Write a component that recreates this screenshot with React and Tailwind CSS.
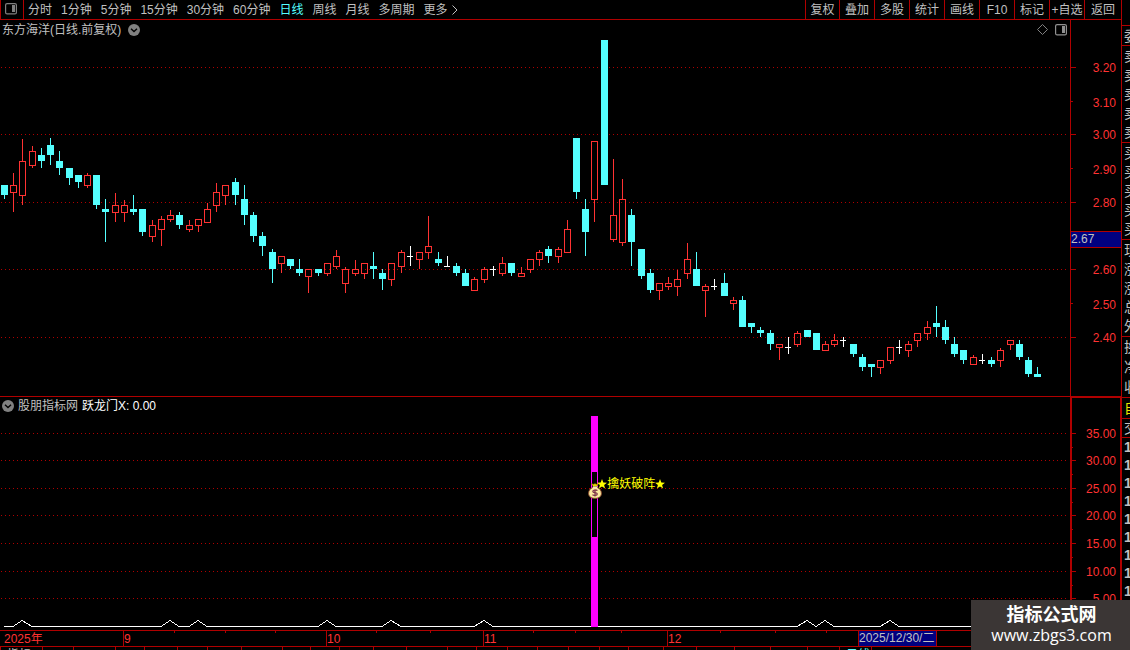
import { Fragment } from 'react';
import clsx from 'clsx';

const PERIODS = ['分时', '1分钟', '5分钟', '15分钟', '30分钟', '60分钟', '日线', '周线', '月线', '多周期'];

const TOOLS = [
  { label: '复权', width: 'w-[34px]' },
  { label: '叠加', width: 'w-[35px]' },
  { label: '多股', width: 'w-[35px]' },
  { label: '统计', width: 'w-[35px]' },
  { label: '画线', width: 'w-[35px]' },
  { label: 'F10', width: 'w-[35px]' },
  { label: '标记', width: 'w-[35px]' },
  { label: '+自选', width: 'w-[35px]' },
  { label: '返回', width: 'w-[37px]' },
];

// [high, body top, body bottom, low, kind]  d = down, u = up, f = flat
const CANDLES = [
  [185, 185, 195, 199, 'd'], [173, 185, 193, 212, 'u'], [139, 161, 196, 205, 'u'], [146, 151, 166, 168, 'u'],
  [148, 155, 161, 168, 'd'], [138, 145, 155, 165, 'd'], [151, 161, 168, 175, 'd'], [168, 168, 178, 185, 'd'],
  [175, 175, 182, 188, 'd'], [173, 175, 186, 188, 'u'], [175, 175, 205, 209, 'd'], [199, 209, 212, 242, 'd'],
  [193, 205, 213, 222, 'u'], [200, 205, 213, 222, 'u'], [195, 209, 212, 215, 'd'], [209, 209, 232, 236, 'd'],
  [220, 225, 237, 242, 'u'], [216, 219, 230, 246, 'u'], [210, 215, 220, 222, 'u'], [212, 215, 225, 229, 'd'],
  [220, 225, 230, 232, 'u'], [219, 219, 226, 232, 'u'], [203, 209, 223, 223, 'u'], [183, 192, 206, 212, 'u'],
  [185, 185, 196, 205, 'u'], [178, 182, 195, 205, 'd'], [185, 199, 215, 225, 'd'], [212, 215, 236, 242, 'd'],
  [232, 236, 246, 256, 'd'], [249, 252, 269, 283, 'd'], [256, 256, 264, 273, 'u'], [259, 259, 266, 269, 'd'],
  [259, 269, 273, 276, 'd'], [269, 269, 277, 293, 'u'], [269, 269, 273, 276, 'd'], [263, 263, 274, 276, 'u'],
  [250, 256, 267, 269, 'u'], [267, 269, 284, 293, 'u'], [260, 269, 274, 276, 'u'], [263, 263, 274, 279, 'u'],
  [252, 266, 269, 279, 'd'], [269, 273, 279, 290, 'd'], [263, 263, 280, 286, 'u'], [250, 252, 267, 273, 'u'],
  [246, 256, 257, 266, 'f'], [252, 252, 260, 269, 'u'], [216, 246, 253, 259, 'u'], [252, 259, 263, 266, 'd'],
  [256, 266, 267, 267, 'f'], [263, 266, 273, 276, 'd'], [269, 273, 286, 286, 'd'], [277, 279, 291, 291, 'u'],
  [267, 269, 280, 283, 'u'], [266, 269, 270, 276, 'f'], [257, 263, 274, 276, 'u'], [263, 263, 273, 276, 'd'],
  [267, 273, 277, 277, 'u'], [259, 259, 270, 273, 'u'], [250, 252, 260, 266, 'u'], [246, 249, 256, 263, 'd'],
  [247, 249, 257, 263, 'u'], [220, 229, 253, 253, 'u'], [138, 138, 192, 199, 'd'], [199, 209, 232, 256, 'd'],
  [141, 141, 200, 222, 'u'], [40, 40, 185, 185, 'd'], [159, 215, 240, 242, 'u'], [179, 199, 243, 246, 'u'],
  [209, 215, 242, 266, 'd'], [249, 249, 276, 279, 'd'], [269, 273, 290, 293, 'd'], [283, 283, 291, 300, 'u'],
  [277, 283, 287, 290, 'u'], [270, 279, 287, 296, 'u'], [243, 259, 274, 279, 'u'], [252, 269, 286, 286, 'd'],
  [284, 286, 291, 317, 'u'], [279, 286, 287, 290, 'f'], [273, 283, 296, 296, 'd'], [297, 300, 304, 310, 'u'],
  [296, 300, 327, 327, 'd'], [323, 323, 327, 333, 'd'], [327, 330, 333, 337, 'd'], [330, 333, 344, 350, 'd'],
  [344, 344, 348, 360, 'u'], [337, 347, 348, 354, 'f'], [331, 333, 345, 347, 'u'], [330, 330, 337, 337, 'd'],
  [333, 333, 350, 350, 'd'], [341, 344, 351, 351, 'u'], [334, 340, 345, 347, 'u'], [337, 340, 341, 347, 'f'],
  [344, 344, 354, 357, 'd'], [354, 357, 367, 371, 'd'], [364, 364, 367, 377, 'd'], [360, 360, 368, 374, 'u'],
  [347, 347, 361, 364, 'u'], [340, 347, 348, 354, 'f'], [341, 344, 351, 357, 'u'], [333, 333, 341, 347, 'u'],
  [321, 327, 334, 340, 'u'], [306, 323, 327, 337, 'd'], [320, 327, 340, 344, 'd'], [337, 344, 354, 357, 'd'],
  [350, 350, 360, 364, 'd'], [355, 357, 365, 365, 'u'], [354, 360, 361, 364, 'f'], [357, 360, 364, 367, 'd'],
  [348, 350, 361, 367, 'u'], [340, 340, 345, 350, 'u'], [340, 344, 357, 360, 'd'], [357, 360, 374, 377, 'd'],
  [367, 374, 377, 377, 'd'],
];

const SIGNALS = [2, 18, 21, 35, 42, 52, 87, 89, 96];

const PRICE_MARKS = [
  { y: 67, label: '3.20', major: true },
  { y: 101, label: '3.10' },
  { y: 134, label: '3.00', major: true },
  { y: 168, label: '2.90' },
  { y: 202, label: '2.80', major: true },
  { y: 269, label: '2.60', major: true },
  { y: 303, label: '2.50' },
  { y: 337, label: '2.40', major: true },
];

const VALUE_MARKS = [
  { y: 433, label: '35.00' },
  { y: 460, label: '30.00' },
  { y: 488, label: '25.00' },
  { y: 515, label: '20.00' },
  { y: 543, label: '15.00' },
  { y: 571, label: '10.00' },
  { y: 598, label: '5.00' },
];

const MONTHS = [
  { x: 123, label: '9' },
  { x: 326, label: '10' },
  { x: 483, label: '11' },
  { x: 667, label: '12' },
];
const WEEK_TICKS = [174, 225, 275, 376, 430, 533, 575, 621, 720, 775, 826];

const QUOTE_SECTIONS = [
  { rows: ['委'], style: 'h-[20px] text-[#c0c0c0]' },
  { rows: ['卖', '卖', '卖', '卖', '卖'], style: 'h-[97px] text-[#c0c0c0]' },
  { rows: ['买', '买', '买', '买', '买'], style: 'h-[97px] text-[#c0c0c0]' },
  { rows: ['现', '涨', '涨', '总', '外'], style: 'h-[97px] text-[#c0c0c0]' },
  { rows: ['换', '净', '收'], style: 'h-[61px] text-[#c0c0c0]' },
  { rows: ['自'], style: 'h-[21px] text-[#e6e600]' },
  { rows: ['交'], style: 'h-[19px] text-[#c0c0c0]' },
  { rows: ['1', '1', '1', '1', '1', '1', '1', '1', '1', '1', '1', '1'], style: 'h-[217px] font-bold text-[#c0c0c0]' },
];

const STATUS_TABS = [0, 42, 73, 115, 144, 177, 207, 241, 282, 310, 339, 373, 406, 447, 476, 507, 537, 568, 599, 628, 663, 696, 734, 770, 807, 839, 871];

const candleX = (i) => Math.round(4 + i * 9.225);

function Candle({ x, data }) {
  const [high, top, bottom, low, kind] = data;
  if (kind === 'f') {
    return (
      <g fill="#ffffff">
        <rect x={x} y={high} width="1" height={low - high} />
        <rect x={x - 3} y={top} width="6" height="1" />
      </g>
    );
  }
  if (kind === 'd') {
    return (
      <g fill="#54ffff">
        <rect x={x} y={high} width="1" height={low - high} />
        <rect x={x - 3} y={top} width="7" height={bottom - top} />
      </g>
    );
  }
  return (
    <g fill="#ff3232">
      <rect x={x} y={high} width="1" height={top - high} />
      <rect x={x} y={bottom} width="1" height={low - bottom} />
      <rect x={x - 3} y={top} width="7" height="1" />
      <rect x={x - 3} y={bottom - 1} width="7" height="1" />
      <rect x={x - 3} y={top} width="1" height={bottom - top} />
      <rect x={x + 3} y={top} width="1" height={bottom - top} />
    </g>
  );
}

function GridLine({ y }) {
  return <line x1="1" x2="1068" y1={y + 0.5} y2={y + 0.5} stroke="#b00000" strokeDasharray="1 3" />;
}

function SplitIcon({ color }) {
  return (
    <svg width="12" height="12" viewBox="0 0 12 12" className="block">
      <rect x="0.6" y="0.6" width="10.8" height="10.3" rx="1.5" fill="none" stroke={color} strokeWidth="1.2" />
      <rect x="7" y="2" width="3" height="7" fill={color} />
    </svg>
  );
}

function RoundChevron() {
  return (
    <svg width="12" height="12" viewBox="0 0 12 12" className="block">
      <circle cx="6" cy="6" r="6" fill="#808080" />
      <path d="M3 4.8 L6 7.6 L9 4.8" fill="none" stroke="#000" strokeWidth="1.4" />
    </svg>
  );
}

function Star() {
  return (
    <svg width="10" height="10" viewBox="0 0 10 10" className="block">
      <path d="M5 0 L6.3 3.5 L10 3.7 L7.1 6 L8.1 9.6 L5 7.5 L1.9 9.6 L2.9 6 L0 3.7 L3.7 3.5 Z" fill="#ffff00" />
    </svg>
  );
}

function MoneyBag() {
  return (
    <svg width="14" height="16" viewBox="0 0 14 16" className="block">
      <path d="M3.5 0.5 L5.5 1.2 L7 0.6 L8.5 1.2 L10.5 0.5 L9 3.5 L5 3.5 Z" fill="#e8d800" stroke="#6b5200" strokeWidth="0.5" />
      <path d="M5 4.3 C2 5.6 0.6 7.8 0.6 10.3 C0.6 13.6 3 15.3 7 15.3 C11 15.3 13.4 13.6 13.4 10.3 C13.4 7.8 12 5.6 9 4.3 Z" fill="#fbe9a0" stroke="#8a4b2a" strokeWidth="1" />
      <path d="M4.8 4.2 H9.2" stroke="#fff7d0" strokeWidth="1.4" />
      <path d="M9.4 7.6 C8.6 6.8 4.8 6.5 4.8 8.4 C4.8 10.2 9.3 9.2 9.3 11.1 C9.3 12.9 5.2 12.7 4.5 11.7 M7 6.2 V13.4" fill="none" stroke="#7a3048" strokeWidth="1.2" />
    </svg>
  );
}

function Toolbar() {
  return (
    <header className="flex h-5 shrink-0 items-stretch border-b border-[#b00000]">
      <button aria-label="切换面板" className="flex w-6 shrink-0 items-center border-x border-[#b00000] pb-0.5 pl-1">
        <SplitIcon color="#808080" />
      </button>
      <nav className="flex flex-1 items-center gap-[9px] pl-1">
        {PERIODS.map((p) => (
          <button key={p} className={clsx('whitespace-nowrap', p === '日线' && 'text-[#54ffff]')}>{p}</button>
        ))}
        <button className="flex items-center gap-1 whitespace-nowrap">
          更多
          <svg width="6" height="10" viewBox="0 0 6 10">
            <path d="M0.5 0.5 L5 5 L0.5 9.5" fill="none" stroke="#c0c0c0" />
          </svg>
        </button>
      </nav>
      <div className="flex items-stretch">
        {TOOLS.map((t) => (
          <button key={t.label} className={clsx('flex items-center justify-center whitespace-nowrap border-l border-[#b00000]', t.width)}>
            {t.label}
          </button>
        ))}
      </div>
    </header>
  );
}

function PricePane() {
  return (
    <section className="flex shrink-0">
      <div className="relative min-w-0 flex-1">
        <svg viewBox="0 20 1070 376" preserveAspectRatio="none" shapeRendering="crispEdges" className="block h-[376px] w-full">
          {PRICE_MARKS.filter((m) => m.major).map((m) => <GridLine key={m.y} y={m.y} />)}
          {CANDLES.map((c, i) => <Candle key={i} x={candleX(i)} data={c} />)}
        </svg>
        <div className="absolute inset-x-0 top-0 flex h-[19px] items-center justify-between pl-[2px] pr-[3px]">
          <h1 className="flex items-center gap-[7px]">
            东方海洋(日线.前复权)
            <RoundChevron />
          </h1>
          <div className="flex items-center gap-[7px]">
            <svg width="11" height="11" viewBox="0 0 11 11">
              <path d="M5.5 0.5 L10.5 5.5 L5.5 10.5 L0.5 5.5 Z" fill="none" stroke="#808080" />
            </svg>
            <SplitIcon color="#909090" />
          </div>
        </div>
      </div>
      <svg width="51" height="376" viewBox="0 20 51 376" className="block shrink-0">
        <g fill="#b00000">
          <rect x="0" y="20" width="1" height="376" />
          {PRICE_MARKS.map((m) => <rect key={m.y} x="1" y={m.y} width={m.major ? 5 : 2} height="1" />)}
        </g>
        <rect x="1" y="231" width="50" height="17" fill="#b00000" />
        <rect x="1" y="232" width="50" height="15" fill="#000080" />
        <text x="1" y="243" fontSize="12" fill="#c0c0c0">2.67</text>
        {PRICE_MARKS.map((m) => (
          <text key={m.y} x="46" y={m.y + (m.major ? 5 : 6)} fontSize="12" fill="#ff3232" textAnchor="end">{m.label}</text>
        ))}
      </svg>
    </section>
  );
}

function IndicatorPane() {
  const points = CANDLES.map((_, i) => `${candleX(i)},${SIGNALS.includes(i) ? 620.5 : 626.5}`).join(' ');
  return (
    <section className="flex shrink-0">
      <div className="relative min-w-0 flex-1 border-t border-[#b00000]">
        <svg viewBox="0 397 1070 233" preserveAspectRatio="none" shapeRendering="crispEdges" className="block h-[233px] w-full">
          {VALUE_MARKS.map((m) => <GridLine key={m.y} y={m.y} />)}
          <polyline points={points} fill="none" stroke="#ffffff" />
          <rect x="591" y="416" width="7" height="211" fill="#ff00ff" />
          <rect x="592" y="472" width="5" height="65" fill="#000000" />
        </svg>
        <h2 className="absolute left-[2px] top-0 flex h-[17px] items-center gap-1">
          <RoundChevron />
          <span>股朋指标网</span>
          <span className="text-white">跃龙门X: 0.00</span>
        </h2>
        <div className="absolute left-[55%] top-[86px] -ml-px">
          <MoneyBag />
        </div>
        <div className="absolute left-[56%] top-[78px] -ml-0.5 flex h-[18px] items-center text-[#ffff00]">
          <Star />
          擒妖破阵
          <Star />
        </div>
      </div>
      <svg width="51" height="234" viewBox="0 396 51 234" className="block shrink-0">
        <g fill="#b00000">
          <rect x="0" y="396" width="51" height="2" />
          <rect x="0" y="396" width="2" height="234" />
          <rect x="50" y="396" width="1" height="234" />
          {VALUE_MARKS.map((m) => (
            <Fragment key={m.y}>
              <rect x="2" y={m.y} width="4" height="1" />
              <rect x="2" y={m.y + 14} width="1" height="1" />
            </Fragment>
          ))}
        </g>
        {VALUE_MARKS.map((m) => (
          <text key={m.y} x="46" y={m.y + 5} fontSize="12" fill="#ff3232" textAnchor="end">{m.label}</text>
        ))}
      </svg>
    </section>
  );
}

function TimeAxis() {
  return (
    <div className="shrink-0 border-t border-[#b00000]">
      <svg width="1070" height="15" viewBox="0 631 1070 15" className="block">
        <g fill="#b00000">
          {MONTHS.map((m) => <rect key={m.x} x={m.x} y="631" width="1" height="15" />)}
          {WEEK_TICKS.map((x) => <rect key={x} x={x} y="631" width="1" height="2" />)}
          <rect x="858" y="631" width="79" height="15" />
        </g>
        <rect x="859" y="631" width="77" height="15" fill="#000080" />
        <g fontSize="12" fill="#ff3232">
          <text x="4" y="643">2025年</text>
          {MONTHS.map((m) => <text key={m.x} x={m.x + 1} y="643">{m.label}</text>)}
        </g>
        <text x="859" y="642" fontSize="12" fill="#c0c0c0">2025/12/30/二</text>
      </svg>
    </div>
  );
}

function StatusTabs() {
  return (
    <footer className="flex min-h-0 flex-1 overflow-hidden border-t border-[#b00000]">
      {STATUS_TABS.map((x, i) => (
        <div
          key={x}
          className={clsx('shrink-0 whitespace-nowrap border-l border-[#b00000] pl-1.5', x === 839 && 'text-[#54ffff]')}
          style={{ width: (STATUS_TABS[i + 1] ?? 971) - x }}
        >
          {x === 0 && '指标'}
          {x === 839 && '日线'}
        </div>
      ))}
    </footer>
  );
}

function QuoteStrip() {
  return (
    <aside className="flex w-[9px] shrink-0 flex-col overflow-hidden border-l border-[#b00000] pt-[25px] text-sm leading-none">
      {QUOTE_SECTIONS.map((s, i) => (
        <div key={i} className={clsx('flex shrink-0 flex-col border-t border-[#b00000] pl-[2px]', s.style)}>
          {s.rows.map((r, j) => (
            <span key={j} className="flex flex-1 items-center whitespace-nowrap">{r}</span>
          ))}
        </div>
      ))}
    </aside>
  );
}

export default function App() {
  return (
    <div className="relative flex h-screen w-full overflow-hidden bg-black font-['Liberation_Sans','Noto_Sans_CJK_SC',sans-serif] text-xs text-[#c0c0c0]">
      <main className="flex min-w-0 flex-1 flex-col">
        <Toolbar />
        <PricePane />
        <IndicatorPane />
        <TimeAxis />
        <StatusTabs />
      </main>
      <QuoteStrip />
      <div className="absolute bottom-0 right-0 flex h-[50px] w-[159px] flex-col items-center justify-center bg-[#3b3635] pl-0.5 text-white">
        <strong className="text-lg leading-5">指标公式网</strong>
        <a href="#" className="font-['Open_Sans',sans-serif] text-base leading-5">www.zbgs3.com</a>
      </div>
    </div>
  );
}
